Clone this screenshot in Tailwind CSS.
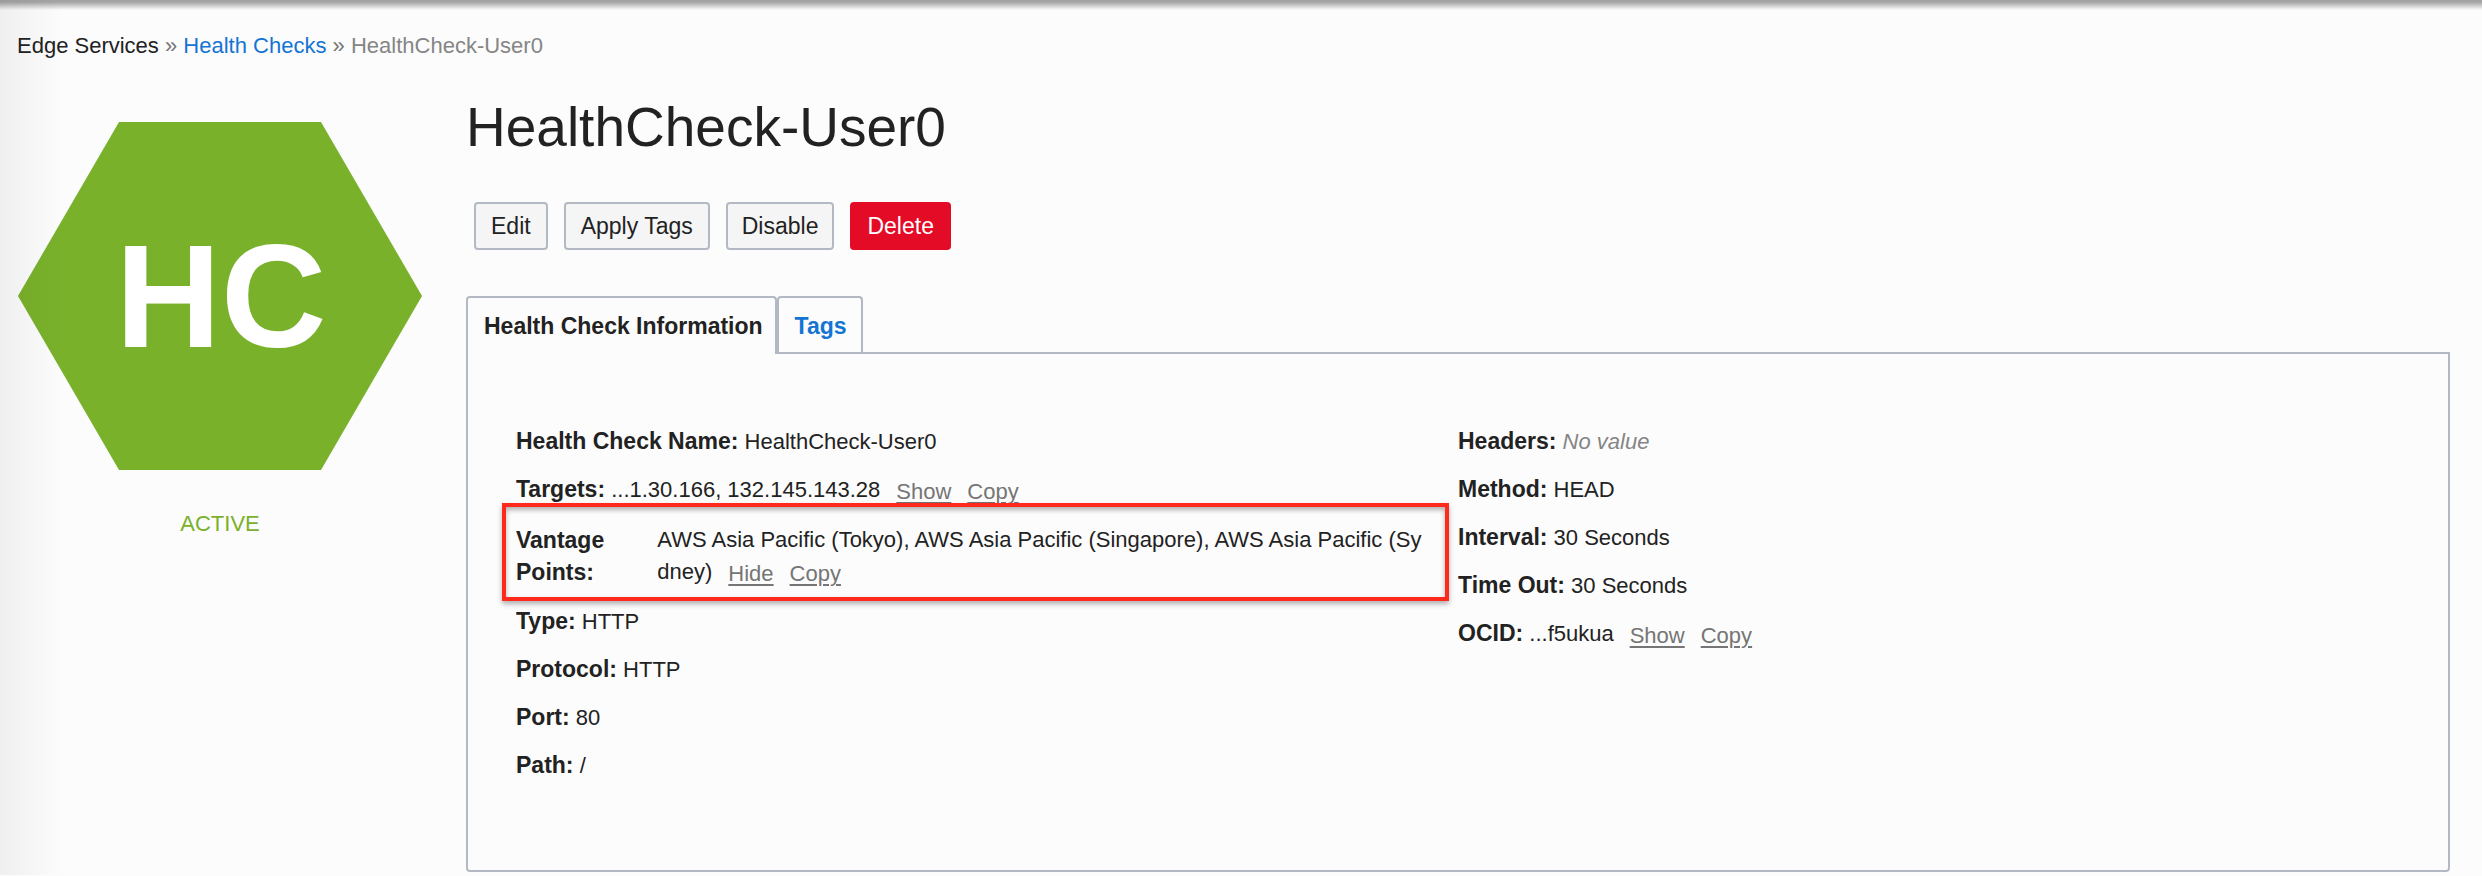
<!DOCTYPE html>
<html lang="en">
<head>
<meta charset="utf-8">
<title>HealthCheck-User0</title>
<script src="https://cdn.jsdelivr.net/npm/@tailwindcss/browser@4"></script>
</head>
<body class="relative bg-[#fcfcfc] pb-[3px] font-['Liberation_Sans',Arial,sans-serif] text-[22px] leading-8 text-[#222]">
  <div class="pointer-events-none absolute inset-y-0 left-0 w-16 bg-linear-to-r from-black/5 to-transparent"></div>
  <div class="pointer-events-none absolute inset-x-0 top-0 h-[10px] bg-linear-to-b from-black/35 from-20% to-transparent"></div>

  <nav aria-label="Breadcrumb" class="pt-[30px] pl-[17px]">
    <span>Edge Services</span> <span class="text-[#757575]">»</span>
    <a href="#" class="text-[#1474d4]">Health Checks</a> <span class="text-[#757575]">»</span>
    <span class="text-[#858585]">HealthCheck-User0</span>
  </nav>

  <main class="mt-[33px] flex gap-11 pr-8 pl-[18px]">
    <aside class="w-[404px] shrink-0 pt-[27px] text-center text-[#79b12b]">
      <svg viewBox="0 0 404 348" class="block w-full" role="img" aria-label="HC">
        <path d="M101 0H303L404 174L303 348H101L0 174Z" fill="#79b12b"/>
        <text x="203" y="225" text-anchor="middle" font-size="146" font-weight="700" fill="#fff">HC</text>
      </svg>
      <p class="mt-[38px]">ACTIVE</p>
    </aside>

    <section class="min-w-0 flex-1">
      <h1 class="text-[55px] leading-[64px]">HealthCheck-User0</h1>

      <div class="mt-[43px] flex gap-4 pl-2 text-[23px]">
        <button class="rounded border-2 border-[#b3b9c3] bg-[#f5f5f5] px-[15px] leading-[44px]">Edit</button>
        <button class="rounded border-2 border-[#b3b9c3] bg-[#f5f5f5] px-[15px] leading-[44px]">Apply Tags</button>
        <button class="rounded border-2 border-[#b3b9c3] bg-[#f5f5f5] px-[14px] leading-[44px]">Disable</button>
        <button class="rounded border-2 border-[#e30b26] bg-[#e30b26] px-[15px] leading-[44px] text-white">Delete</button>
      </div>

      <div role="tablist" class="mt-[46px] flex text-[23px] font-bold">
        <button role="tab" aria-selected="true" class="relative -mb-[2px] rounded-t border-2 border-b-0 border-[#b3b9c3] bg-[#fcfcfc] pt-3 pr-3 pb-3 pl-4">Health Check Information</button>
        <button role="tab" aria-selected="false" class="rounded-t border-2 border-b-0 border-[#b3b9c3] pt-3 pr-[14px] pb-[10px] pl-4 text-[#1474d4]">Tags</button>
      </div>

      <div role="tabpanel" class="grid grid-cols-2 rounded-b border-2 border-[#b3b9c3] px-12 pt-[72px] pb-[88px]">
        <dl class="flex flex-col gap-4">
          <div><dt class="inline text-[23px] leading-none font-bold">Health Check Name:</dt> <dd class="inline">HealthCheck-User0</dd></div>
          <div><dt class="inline text-[23px] leading-none font-bold">Targets:</dt> <dd class="inline">...1.30.166, 132.145.143.28<a href="#" class="ml-4 align-[-2px] text-[#757575] underline decoration-2 underline-offset-3">Show</a><a href="#" class="ml-4 align-[-2px] text-[#757575] underline decoration-2 underline-offset-3">Copy</a></dd></div>
          <div class="relative flex">
            <dt class="w-[15%] shrink-0 pr-8 text-[23px] font-bold">Vantage Points:</dt>
            <dd class="pr-7 break-all">AWS Asia Pacific (Tokyo), AWS Asia Pacific (Singapore), AWS Asia Pacific (Sydney)<a href="#" class="ml-4 align-[-2px] text-[#757575] underline decoration-2 underline-offset-3">Hide</a><a href="#" class="ml-4 align-[-2px] text-[#757575] underline decoration-2 underline-offset-3">Copy</a>
              <span class="pointer-events-none absolute -top-[21px] right-[9px] -bottom-[11px] -left-[14px] border-4 border-[#ff2a1c] shadow-[0_3px_5px_rgba(0,0,0,0.3),inset_0_3px_5px_rgba(0,0,0,0.3)]"></span>
            </dd>
          </div>
          <div><dt class="inline text-[23px] leading-none font-bold">Type:</dt> <dd class="inline">HTTP</dd></div>
          <div><dt class="inline text-[23px] leading-none font-bold">Protocol:</dt> <dd class="inline">HTTP</dd></div>
          <div><dt class="inline text-[23px] leading-none font-bold">Port:</dt> <dd class="inline">80</dd></div>
          <div><dt class="inline text-[23px] leading-none font-bold">Path:</dt> <dd class="inline">/</dd></div>
        </dl>
        <dl class="flex flex-col gap-4">
          <div><dt class="inline text-[23px] leading-none font-bold">Headers:</dt> <dd class="inline text-[#858585] italic">No value</dd></div>
          <div><dt class="inline text-[23px] leading-none font-bold">Method:</dt> <dd class="inline">HEAD</dd></div>
          <div><dt class="inline text-[23px] leading-none font-bold">Interval:</dt> <dd class="inline">30 Seconds</dd></div>
          <div><dt class="inline text-[23px] leading-none font-bold">Time Out:</dt> <dd class="inline">30 Seconds</dd></div>
          <div><dt class="inline text-[23px] leading-none font-bold">OCID:</dt> <dd class="inline">...f5ukua<a href="#" class="ml-4 align-[-2px] text-[#757575] underline decoration-2 underline-offset-3">Show</a><a href="#" class="ml-4 align-[-2px] text-[#757575] underline decoration-2 underline-offset-3">Copy</a></dd></div>
        </dl>
      </div>
    </section>
  </main>
</body>
</html>
